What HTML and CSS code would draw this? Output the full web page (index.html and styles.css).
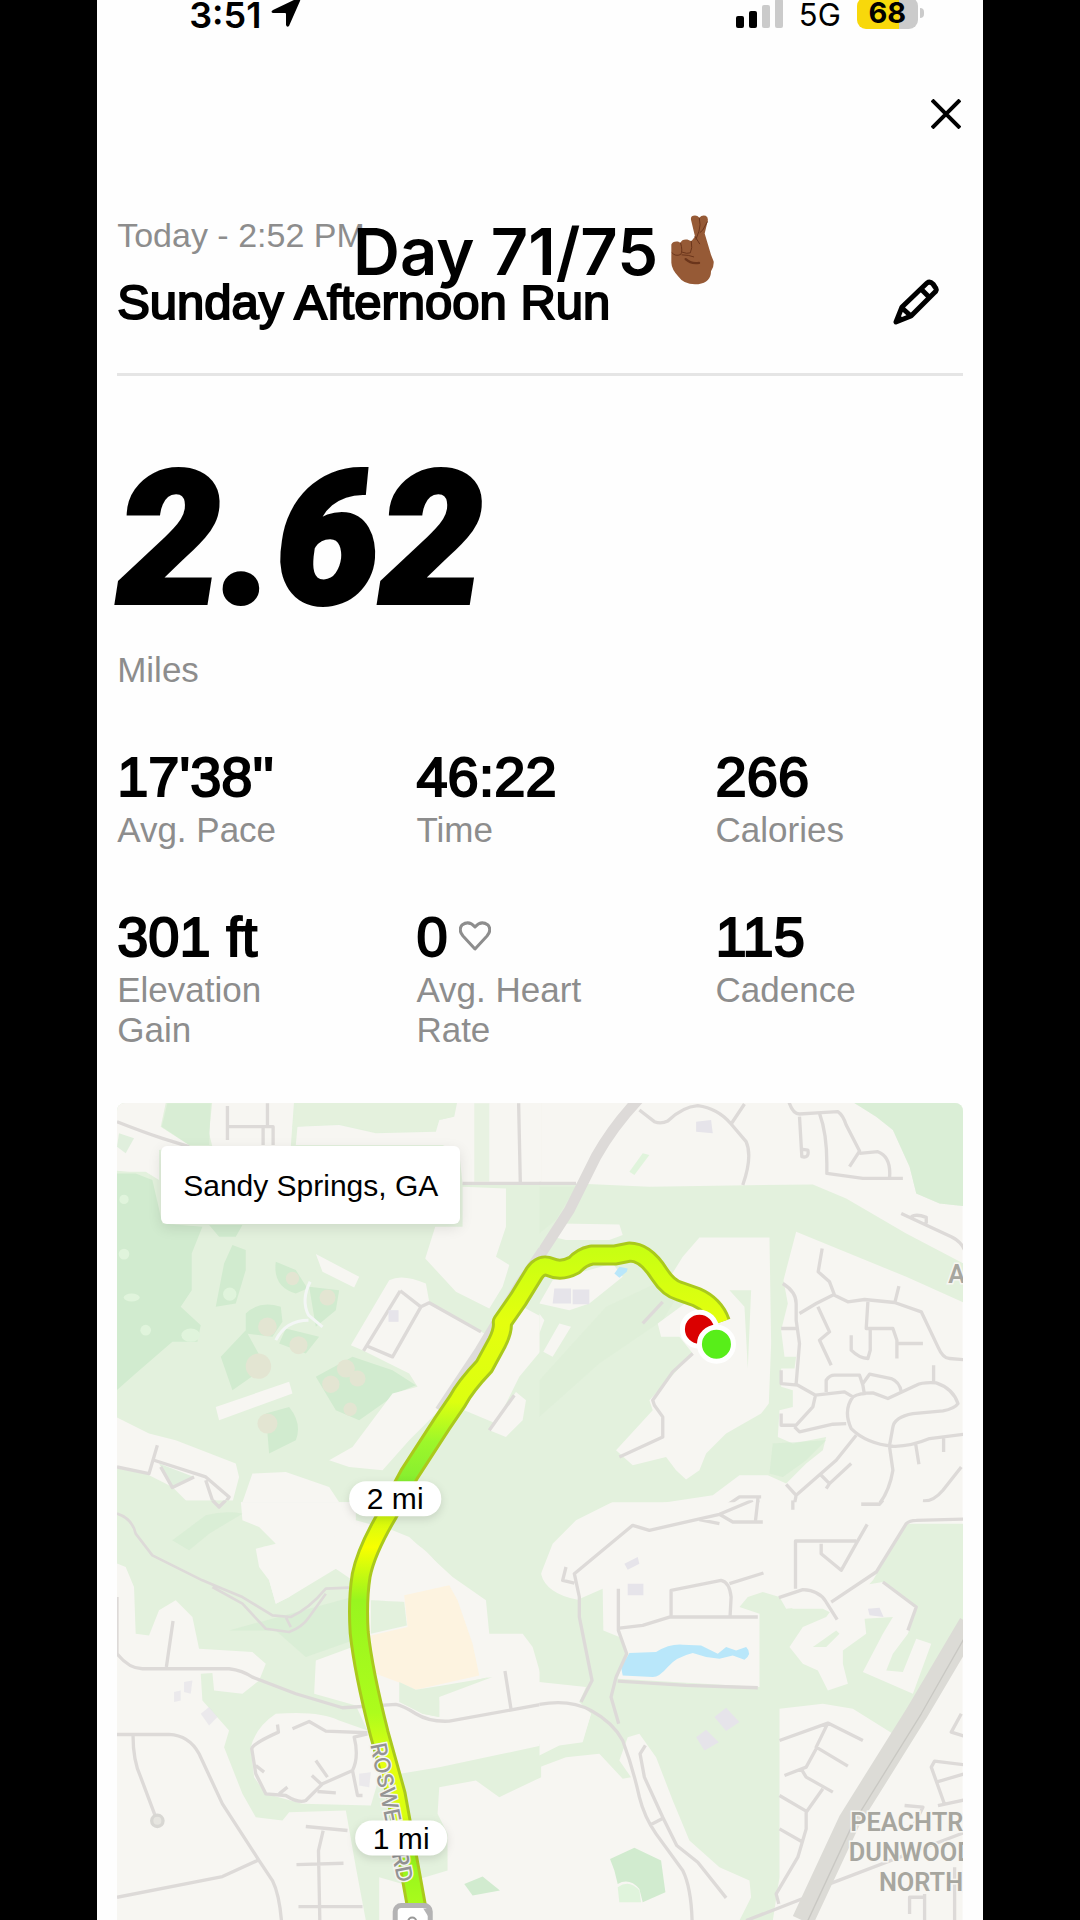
FILE: index.html
```html
<!DOCTYPE html>
<html lang="en">
<head>
<meta charset="utf-8">
<meta name="viewport" content="width=device-width, initial-scale=1">
<title>Sunday Afternoon Run</title>
<link rel="stylesheet" href="styles.css">
</head>
<body>
<main class="screen">
  <div class="status">
    <div class="status-group">
      <span class="clock">3:51</span>
      <svg class="locate" viewBox="0 0 30 30" aria-hidden="true"><path d="M28 1Q30 0 29 3L18 28Q16 30 15 27V16Q15 15 14 15H2Q-1 14 2 12L25 1Z"/></svg>
    </div>
    <div class="status-group">
      <svg class="signal" viewBox="0 0 47 32" aria-hidden="true"><rect y="20" width="8" height="12" rx="2"/><rect x="13" y="15" width="8" height="17" rx="2"/><g fill="#cbcbcb"><rect x="26" y="9" width="8" height="23" rx="2"/><rect x="39" y="3" width="8" height="29" rx="2"/></g></svg>
      <span class="network">5G</span>
      <span class="battery"><span class="level">68</span></span>
    </div>
  </div>

  <div class="toolbar">
    <button class="icon-button" type="button" aria-label="Close">
      <svg class="close" viewBox="0 0 30 30"><path d="M1 1L29 29M29 1L1 29"/></svg>
    </button>
  </div>

  <div class="caption">
    <span>Day 71/75</span>
    <svg class="fingers" viewBox="90 40 135 215" role="img" aria-label="Crossed fingers">
      <path fill="#965a36" d="M94 134Q98 123 114 125L121 129Q126 117 142 119L154 124L165 110L153 60Q151 47 165 47Q173 47 178 54Q185 45 197 48Q207 53 202 68L194 101L213 165L221 185Q222 203 213 214Q213 247 175 253Q134 257 115 230Q95 209 94 189Z"/>
      <g fill="none" stroke="#6b351b" stroke-width="3" stroke-linecap="round"><path d="M165 110L179 132M178 55Q183 76 177 94L168 118M202 66L188 91L180 98M122 130Q129 154 122 164Q106 171 96 159M154 124Q158 146 151 159Q142 163 126 157M126 165Q146 165 161 171"/><path stroke-width="7" d="M137 178Q153 193 177 189"/></g>
    </svg>
  </div>

  <header class="heading">
    <p class="label">Today - 2:52 PM</p>
    <div class="title-row">
      <h1>Sunday Afternoon Run</h1>
      <button class="icon-button edit" type="button" aria-label="Edit name">
        <svg class="pencil" viewBox="0 0 46 46"><path d="M3 43L9 28L34 4Q37 2 40 5L42 8Q45 11 41 14L18 37ZM28 10L37 19M9 29L18 37M4 38L9 41"/></svg>
      </button>
    </div>
  </header>

  <section class="distance">
    <p class="distance-value">2.62</p>
    <p class="label">Miles</p>
  </section>

  <dl class="stats">
    <div><dd>17'38''</dd><dt>Avg. Pace</dt></div>
    <div><dd>46:22</dd><dt>Time</dt></div>
    <div><dd>266</dd><dt>Calories</dt></div>
    <div><dd>301 ft</dd><dt>Elevation Gain</dt></div>
    <div><dd>0 <svg class="heart" viewBox="0 0 32 30" aria-hidden="true"><path d="M16 28L4 15Q-1 9 3 4Q10-1 16 6Q22-1 29 4Q33 9 28 15Z"/></svg></dd><dt>Avg. Heart Rate</dt></div>
    <div><dd>115</dd><dt>Cadence</dt></div>
  </dl>

  <section class="map" aria-label="Route map">
    <svg class="map-art" viewBox="118 1103 845 817">
      <defs>
        <linearGradient id="pace" gradientUnits="userSpaceOnUse" x1="0" y1="1250" x2="0" y2="1910">
          <stop offset="0" stop-color="#c8ff12"/><stop offset=".11" stop-color="#e4ff0e"/><stop offset=".23" stop-color="#dcff10"/><stop offset=".29" stop-color="#9df72a"/><stop offset=".35" stop-color="#86ee30"/><stop offset=".4" stop-color="#cffa12"/><stop offset=".45" stop-color="#f8ff00"/><stop offset=".53" stop-color="#98f51f"/><stop offset=".7" stop-color="#adfc1c"/><stop offset=".78" stop-color="#e6ff10"/><stop offset=".86" stop-color="#d6ff10"/><stop offset=".93" stop-color="#96f51c"/><stop offset="1" stop-color="#adfc1c"/>
        </linearGradient>
        <path id="route" d="M721 1322Q715 1305 697 1297L680 1291Q669 1288 660 1274Q646 1252 630 1252L615 1255H592Q582 1257 575 1265Q562 1272 551 1267Q542 1263 535 1273L519 1299L503 1322Q504 1330 498 1342L485 1366Q466 1386 458 1401L443 1423L410 1474L389 1513Q367 1550 362 1575Q358 1600 360 1632Q364 1670 380 1733L397 1794L418 1910"/>
        <path id="street" d="M371 1744L384 1810L406 1920"/>
      </defs>
      <rect class="land" x="118" y="1103" width="845" height="817"/>

      <!-- north-west -->
      <svg x="110" y="1090" width="432" height="412" viewBox="0 0 1296 1236">
        <rect class="park" width="1296" height="1236"/>
        <path class="wood" d="M0 250H80L130 270L160 400L280 410L248 490V600L215 650L275 705L265 755H190L80 850L0 920ZM300 405H400L380 440H330ZM345 520L370 465L410 480V540L380 640L320 650ZM500 515L560 540L595 595L560 610Q490 590 500 515ZM600 590L690 600L680 660L620 710ZM410 670Q450 630 515 650L520 695L490 740L410 730ZM335 800L410 720L470 830L370 900ZM530 715L630 740L590 790L510 760ZM470 970L540 950Q580 1000 560 1050L480 1090ZM620 860L730 800L850 840L920 885L870 905L750 990L680 960Z"/>
        <path class="land" d="M0 30H172L155 110L240 165L150 180V270L110 245H60L0 240ZM310 30H555L545 170H310L300 130ZM565 110L690 105L800 130L980 125L990 90L1035 80L1045 30H1296V280H1060L1050 190L1000 165H560ZM1060 290L1190 295V410L1160 500L1200 525L1180 590L1140 655L1040 605L948 505L978 410H1060ZM725 765L840 570Q880 550 950 580L960 635L1125 730L1080 830L980 970L900 1050L820 1140L720 1130L660 1110L730 1070L790 990L850 910L925 890L900 850L760 780ZM620 492L750 560L735 592L640 545ZM320 950L540 875L550 910L330 990ZM0 970L120 1030L200 1050L380 1120L390 1160L370 1236L250 1250L190 1190L110 1150L0 1130ZM430 1150L530 1145L660 1190L690 1236H400ZM1240 650L1296 680V780L1230 860L1160 1000L1065 960L1150 800ZM1140 1020L1220 905L1250 930L1240 990L1190 1040Z"/>
        <path class="wood" d="M200 40H305L300 165H240L158 110L175 40ZM30 130L75 145L50 190L24 170ZM150 1120L255 1160L190 1190Z" opacity=".6"/>
        <path class="park" d="M565 40H1035L1030 80L990 90L975 122L800 127L690 102L550 110ZM1095 40H1140V275H1095Z" opacity=".8"/>
        <g class="bunker"><circle cx="550" cy="565" r="20"/><circle cx="655" cy="622" r="24"/><circle cx="475" cy="710" r="28"/><circle cx="568" cy="765" r="27"/><circle cx="448" cy="828" r="38"/><circle cx="665" cy="882" r="26"/><circle cx="710" cy="835" r="27"/><circle cx="745" cy="865" r="24"/><circle cx="475" cy="1000" r="30"/><circle cx="723" cy="957" r="20"/></g>
        <g class="glade"><circle cx="45" cy="492" r="16"/><ellipse cx="68" cy="622" rx="24" ry="12"/><circle cx="110" cy="720" r="16"/><circle cx="362" cy="612" r="20"/><circle cx="45" cy="328" r="14"/><ellipse cx="245" cy="735" rx="28" ry="20"/></g>
        <path class="path" d="M603 575Q575 630 598 675L640 710M598 690Q530 690 500 750"/>
        <path class="road" d="M24 95Q100 125 160 145L240 170M355 48V150M355 110H492V165M475 40V110M462 110V165M1228 40L1233 275M1060 280H1296M873 602L763 782M873 602L935 650L850 800L775 768M935 650L960 638L1115 725M1140 1020L1215 915M145 1065L120 1150L24 1130M135 1110L290 1160L360 1220L340 1250L310 1230L290 1170M155 1130L190 1192L255 1160"/>
        <rect class="building" x="838" y="660" width="30" height="35"/>
      </svg>

      <!-- north-east -->
      <svg x="540" y="1090" width="430" height="412" viewBox="0 0 1290 1236">
        <path class="park" d="M0 285L110 280L330 290L820 283L920 325L1100 430L1290 530V645L1100 560L770 425L732 570L745 640L725 720L735 800H770L765 835H725V890L760 900V950L720 960L715 1040L760 1060L860 1040L850 1080L800 1120L740 1180L685 1155H600L520 1215L220 1260H0ZM930 30H1290V350L1200 340L1130 310L1110 230L1060 120L1010 80Z"/>
        <path class="wood" opacity=".5" d="M930 30H1290V350L1200 340L1130 310L1110 230L1060 120L1010 80ZM570 600H635L625 835L615 650ZM700 1060L860 1050L800 1110L730 1160L690 1150Z"/>
        <path class="wood" opacity=".2" d="M0 290H110L50 390L0 430ZM0 870L200 650L370 570L420 610L370 690L180 820L0 980Z"/>
        <path class="glade" d="M270 245L310 190L330 195L285 255Z"/>
        <path class="land" d="M40 440L60 400L240 403L250 435L210 450L80 450ZM480 442H690L695 760L688 940L665 970L560 1030L500 1090L480 1140L440 1168L410 1140L380 1100L280 1125L230 1080L340 960L330 930L460 790L420 740H365L355 700L450 630L380 580L430 500ZM0 670L15 690L0 730ZM60 700L95 710L40 800L12 785ZM0 640L40 570L220 520L250 560L150 640L90 660Z"/>
        <path class="park" d="M570 600H635L625 835L615 650Z"/>
        <path class="highway" d="M300 25Q220 110 170 200L90 360L-20 530"/>
        <path class="road" d="M0 280H110M300 60L345 95Q365 103 385 93Q430 50 475 47Q535 55 575 102L620 155Q640 200 610 285M575 102L615 42M748 35Q760 72 780 72L845 68L895 65Q910 75 920 105L960 183L930 230M960 190L1015 185Q1055 200 1050 262M840 70Q862 130 862 220V250L970 265H1090M780 80L787 200Q810 205 805 180L790 178M1085 370L1235 440Q1265 455 1275 480M1115 380Q1130 370 1160 382V400M848 475L836 545L870 575L885 615L925 635L975 628L1065 637L1145 665L1195 770Q1210 805 1230 805L1290 810M885 612L830 640L780 670M835 650L870 725L840 750L875 825M1078 588L1066 637M985 635L980 715H1060L1072 750V805M1072 760H1150M935 735V780Q960 805 985 805L992 780V720M730 580Q770 605 770 640V690L780 760L770 880M725 715H770M725 840V880L775 885L828 915L820 950L770 1005H725V970M828 915L915 905L940 920M860 905V870Q870 855 885 855H960L970 885L975 915M970 880L990 852L1055 865Q1080 875 1085 905M940 920Q960 908 1000 908L1045 925L1130 885Q1150 875 1190 878Q1240 895 1255 940Q1245 955 1210 962L1120 970Q1065 980 1060 1010L1050 1065M940 920Q910 960 935 1015Q980 1060 1060 1068Q1110 1070 1170 1045L1290 1030M920 1000L880 1002L780 1025L765 1010M1182 825V875M950 1035L890 1110L770 1215L740 1182M770 1215L765 1240M845 1155L870 1180L935 1120M860 1195L870 1180M1050 1070L1060 1140Q1050 1200 1020 1240H965M1128 1060L1138 1122M1212 1045V1085M1150 1232Q1180 1235 1210 1200L1265 1130M460 790L400 845L340 930L345 945L370 980V1040L240 1100M540 1260L600 1220H665M655 1220V1260M370 635L310 700"/>
        <path class="stream" d="M225 550L240 530L265 535L262 545L240 563Z"/>
        <path class="building" d="M45 595H95V640H40ZM100 598H150V642H100ZM470 95L515 90L520 130L470 125Z"/>
        <text class="area area-lone" x="1226" y="580">A</text>
      </svg>

      <!-- south-west -->
      <svg x="110" y="1500" width="432" height="420" viewBox="0 0 1296 1260">
        <path class="park" d="M0 0H395L400 60L450 80L500 130L440 145L450 200L480 240L500 310L540 290L680 205L730 240V440L620 480L615 580L740 615L775 690L690 660Q630 630 500 640Q440 680 425 740L435 830L470 880L580 910L785 915L810 830L990 800L1180 760L1296 735V830L1170 890L1100 840L990 860L985 940L1015 1000V1110L880 1150L810 1130V1260H770L740 1100L710 930L540 935L520 960L440 950L400 880L345 740L360 690L280 600L275 520L310 518L315 570L400 580L450 540L470 490L430 455L270 445L250 350L200 300L150 330L120 405L80 400L75 260L50 200L0 180ZM740 60L850 90L900 110L1030 230L1130 300L1140 400H1240L1270 440L1296 530V0H740ZM785 300L890 305V380L790 400ZM870 540L1000 560L1140 530L990 590V650L940 640L870 600Z"/>
        <path class="land" d="M460 140L730 100L725 230L680 205L620 230L540 290L500 310L480 240ZM840 95Q930 120 980 185L1040 250L1100 290V600L780 600V300L900 305Z"/>
        <path class="wood" opacity=".5" d="M190 120L290 45Q350 30 400 40L300 100L240 150ZM360 390L730 290V420L590 470L500 390Z"/>
        <path class="wood" d="M1065 1150L1120 1128L1172 1170L1090 1185Z"/>
        <path class="sand" d="M885 285L1020 255L1045 300L1090 430L1110 525L1000 550L920 568L880 550L800 520L785 405L895 380Z"/>
        <path class="park" d="M785 300L885 305L893 375L785 400ZM870 545L920 568L1000 555L1150 530L990 590V650L940 640L870 605Z"/>
        <path class="road thin" d="M24 40Q70 55 80 100L130 165L280 240L340 265L400 290L490 345L545 350Q600 325 650 265L720 262M310 260L400 310L470 385L540 395Q580 380 600 350L650 280M530 350L545 380"/>
        <path class="road" d="M24 290V460Q60 505 100 505H360Q400 510 430 530L560 580L700 622L860 612Q880 615 920 640Q960 665 1020 662L1296 612M192 362L172 500M1187 512L1205 625M24 702H180Q240 705 270 760L340 910L450 1080L490 1140Q510 1180 517 1260M72 705Q72 780 95 830L140 950M24 1190L340 1128L445 1080M505 672L508 695Q430 730 428 745L440 820L470 880L530 885Q570 910 590 900L640 850L730 810Q750 770 735 710L775 700M550 685L600 663L650 692L775 697M440 795L465 815M620 780L655 830M608 825L635 850M510 880L535 860M625 873L680 877M730 810L745 885H760M590 978L715 990M642 990L628 1050L632 1260M562 1092L703 1088M568 1218H760M310 0L330 20L350 0"/>
        <circle class="end" cx="145" cy="961" r="17"/>
        <path class="building" d="M225 545L250 540L245 580L225 575ZM195 575L215 570V600L195 605ZM275 640L300 620L325 650L300 675ZM750 820L785 815L780 860L750 855Z" opacity=".7"/>
      </svg>

      <!-- south-east -->
      <svg x="540" y="1500" width="430" height="420" viewBox="0 0 1290 1260">
        <path class="park" d="M0 0H230L110 60L40 130L5 220Q20 280 115 298L190 265L192 390L240 410L260 460L235 535L660 560V340L600 320L625 290L670 275L720 290L760 325H850L900 350L1000 240L1100 70H1290V330L1060 700L940 625L850 610L720 625V1130L700 1260H600L635 1190L630 1140L540 1100L450 1020L400 900L350 770L300 700L265 710L240 780L275 830L250 835L180 760L80 770L0 800V730L130 720L155 640L0 545Z"/>
        <path class="land" d="M0 545L140 560L120 605L155 640L130 725L60 735L0 765ZM720 290L810 275L830 290L790 320L740 325ZM890 310L970 255L1030 245L1130 320L1105 400L1060 460L1040 510L1090 515L1130 415L1175 430L1120 580L970 515L1030 400L1060 350L975 355L980 400L910 450V490L925 550L865 570L835 510L790 490L750 440L790 380L860 350Z"/>
        <path class="park" d="M820 440L890 390L900 400L860 440Z"/>
        <path class="wood" d="M212 1075L285 1042L365 1080L378 1175L310 1205L300 1165Q270 1130 235 1150L225 1110Z"/>
        <path class="glade" d="M235 1160Q270 1135 300 1170L305 1205H240Z"/>
        <path class="water" d="M270 458L350 455Q390 430 430 433L485 435L535 460L560 440L590 450L620 440Q640 460 615 478L580 465L540 475L500 470L460 458Q410 470 385 500Q360 530 340 530L250 525L245 500Z"/>
        <path class="road" d="M0 612Q90 595 155 630Q220 665 250 720Q280 800 300 890Q315 950 350 1000L430 1110Q455 1160 458 1260M125 605L158 540L140 450L120 350V290L105 220L280 75L330 90L540 42L640 0M540 42L580 65H670M655 0L648 62M80 200L70 240L105 248M540 70L480 58M237 265V390L262 460L230 530L215 590L238 670M240 383L310 375L390 350H655M395 350V270L545 240Q570 245 575 290L572 345M570 250L672 218M235 542L440 555L655 562M318 735L302 760L315 830L370 950L412 1035L475 1085L560 1192M335 972L368 955M768 265V122H950M845 130V160L905 210L950 130L983 72M718 292L790 268Q840 270 860 305L893 358M875 305L1010 215L1100 70Q1110 60 1130 60L1290 56M1030 245L1130 320L1105 390M720 720L865 668L970 720M865 668L830 740L925 797M830 745L800 800L735 825M785 805L800 830L880 875M850 865L800 935V985L775 1070L710 1180L718 1210M720 885L800 932M720 985L785 1022M620 1260L800 1190L870 1150L1290 990M760 0V28M965 12H1020L1030 0M1265 640L1235 695L1290 712M1290 795L1185 782L1175 800L1215 912M1190 845L1290 815M1195 915L1290 895M1095 915L1150 920L1125 970M1110 1240V1190H1155M1155 1180V1260M1245 1100V1260"/>
        <path class="freeway" d="M1290 370L1130 640L930 960L790 1260"/>
        <path class="median" d="M1290 385L1145 640L940 970L805 1260"/>
        <path class="building" d="M265 250H312V285H265ZM525 650L560 622L600 665L560 692ZM470 710L500 688L538 725L495 750ZM985 325L1020 322L1032 350L990 345ZM255 190L295 170L300 190L265 208Z"/>
        <g class="area"><text x="932" y="990">PEACHTR</text><text x="928" y="1080">DUNWOOD</text><text x="1018" y="1172">NORTH</text></g>
      </svg>

      <path class="highway-edge" d="M543 1250L520 1284L480 1350L440 1410"/>
      <use href="#route" class="route-edge"/>
      <use href="#route" class="route-line"/>
      <text class="street"><textPath href="#street">ROSWELL RD</textPath></text>
      <g class="pin"><circle cx="700" cy="1329" r="17" fill="#da0000"/><circle cx="717" cy="1344" r="17" fill="#58ee19"/></g>
      <g class="pill">
        <rect x="350" y="1481" width="92" height="35" rx="17"/><rect x="356" y="1820" width="92" height="35" rx="17"/>
      </g>
      <g class="mile"><text x="396" y="1509">2 mi</text><text x="402" y="1848">1 mi</text></g>
      <rect x="396" y="1905" width="35" height="30" rx="6" fill="#fff" stroke="#b4b3b4" stroke-width="5"/><path d="M424 1908H429V1916Z" fill="#b4b3b4"/><circle cx="413" cy="1921" r="4" fill="none" stroke="#999" stroke-width="2"/>
    </svg>
    <p class="place">Sandy Springs, GA</p>
  </section>
</main>
</body>
</html>
```
FILE: styles.css
```css
* { box-sizing: border-box; }

body {
  margin: 0;
  background: #000;
  color: #000;
  font-family: "Liberation Sans", Arial, sans-serif;
}

p, h1, dl, dd { margin: 0; }

.screen {
  position: relative;
  margin: 0 9%;
  padding: 0 20px;
  background: #fefefe;
}

.status {
  display: flex;
  justify-content: space-between;
  height: 30px;
  padding: 0 39px 0 72px;
  font-family: Inter, sans-serif;
}

.status-group { display: flex; align-items: center; gap: 16px; }
.status-group:first-child { gap: 10px; }
.clock { font-size: 36px; line-height: 32px; font-weight: 600; }
.locate { width: 30px; height: 30px; margin-top: -4px; }
.signal { width: 47px; height: 32px; margin-top: -6px; }
.network { font-size: 31px; line-height: 32px; }

.battery {
  position: relative;
  width: 61px;
  height: 32px;
  margin: -4px 6px 0 0;
  border-radius: 9px;
  background: linear-gradient(90deg, #f8d80b 42px, #cbcbcb 42px);
}

.battery::after {
  content: "";
  position: absolute;
  left: 63px;
  top: 11px;
  width: 4px;
  height: 10px;
  border-radius: 0 4px 4px 0;
  background: #cbcbcb;
}

.level {
  display: block;
  text-align: center;
  font-size: 29px;
  line-height: 32px;
  font-weight: 700;
}

.toolbar { display: flex; justify-content: flex-end; padding: 69px 2px 86px 0; }

.icon-button {
  display: flex;
  padding: 0;
  border: 0;
  background: none;
}

.icon-button svg, .heart { fill: none; stroke: #000; stroke-width: 4; stroke-linejoin: round; }
.close { width: 30px; height: 30px; }
.pencil { width: 46px; height: 46px; }
.icon-button .pencil { stroke-width: 5; }

.caption {
  position: absolute;
  top: 208px;
  left: 0;
  right: 0;
  display: flex;
  align-items: center;
  justify-content: center;
  gap: 12px;
  padding-right: 12px;
  font: 600 65px/88px Inter, sans-serif;
}

.fingers { width: 45px; height: 72px; margin-top: -6px; }

.label, dt { font-size: 35px; line-height: 40px; color: #8d8d8d; }
.heading .label { font-size: 34px; }

.heading { padding-bottom: 43px; border-bottom: 3px solid #e5e5e5; }

.title-row {
  display: flex;
  align-items: center;
  justify-content: space-between;
  margin-top: 19px;
  padding-right: 24px;
}

h1, dd { font-weight: 400; -webkit-text-stroke: 2px #000; }
h1 { font-size: 49px; line-height: 56px; }

.distance { padding: 56px 0 54px; }

.distance-value {
  margin-bottom: 2px;
  font: italic 900 185px/216px Roboto, sans-serif;
  -webkit-text-stroke: 4px #000;
}

.stats {
  display: grid;
  grid-template-columns: repeat(3, 1fr);
  gap: 54px 52px;
  margin-bottom: 53px;
}

dd { font-size: 56px; line-height: 66px; }
.stats > div { display: flex; flex-direction: column; }
dt { max-width: 200px; }
.heart { width: 32px; height: 30px; margin-left: -4px; stroke: #8d8d8d; stroke-width: 3; vertical-align: 5px; }

.map { position: relative; border-radius: 8px 8px 0 0; overflow: hidden; }
.map-art { display: block; width: 100%; }

.place {
  position: absolute;
  top: 43px;
  left: 44px;
  padding: 21px 22px 19px;
  border-radius: 6px;
  background: #fff;
  box-shadow: 0 4px 14px rgb(0 0 0 / 10%);
  font-size: 30px;
  line-height: 38px;
}

.land { fill: #f7f6f2; }
.park { fill: #e3f1dd; }
.wood { fill: #d1ebcf; }
.glade { fill: #e0f4dc; }
.sand { fill: #fdf3e0; }
.bunker { fill: #e3e5d2; }
.water, .stream { fill: #b9e7fa; }
.building { fill: #e6e4ea; }

.road, .path, .highway, .highway-edge, .freeway, .median { fill: none; stroke: #dddad8; stroke-linejoin: round; }
.road { stroke-width: 10; }
.road.thin { stroke-width: 8; }
.path { stroke: #f3f6f5; stroke-width: 9; }
.highway { stroke-width: 32; }
.highway-edge { stroke: #dedcda; stroke-width: 9; }
.freeway { stroke: #dcdbd6; stroke-width: 66; }
.median { stroke: #c9c8c3; stroke-width: 4; }
.end { fill: #e6e5e0; stroke: #d8d7d3; stroke-width: 10; }

.route-edge, .route-line { fill: none; stroke-linejoin: round; }
.route-edge { stroke: #aac91c; stroke-width: 21; }
.route-line { stroke: url(#pace); stroke-width: 15; }

.pin { stroke: #fff; stroke-width: 5; }
.pill { fill: #fff; filter: drop-shadow(0 3px 4px rgb(0 0 0 / 12%)); }
.mile { font-size: 30px; text-anchor: middle; }
.street { font: 500 22px Inter, sans-serif; fill: #949494; stroke: #f4f4ef; stroke-width: 3; paint-order: stroke; }

.area {
  font: 600 76px Roboto, sans-serif;
  fill: #a7a69f;
  stroke: #f7f6f2;
  stroke-width: 9;
  paint-order: stroke;
}
```
